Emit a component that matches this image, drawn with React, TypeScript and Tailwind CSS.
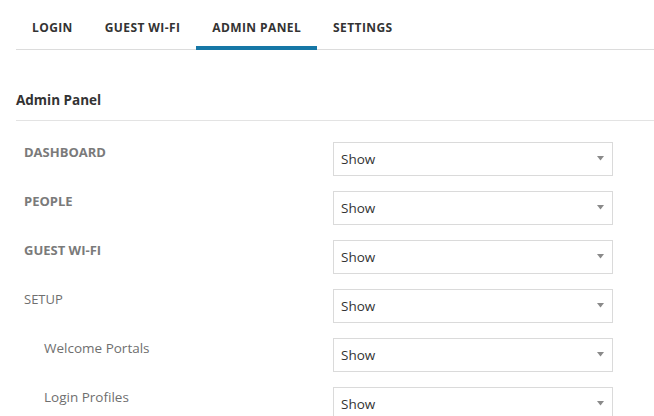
import React from 'react';

const tabs = ['Login', 'Guest Wi-Fi', 'Admin Panel', 'Settings'];

const rows = [
  { label: 'Dashboard', kind: 'section' },
  { label: 'People', kind: 'section' },
  { label: 'Guest Wi-Fi', kind: 'section' },
  { label: 'Setup', kind: 'group' },
  { label: 'Welcome Portals', kind: 'child' },
  { label: 'Login Profiles', kind: 'child' },
];

function Label({ label, kind }: { label: string; kind: string }) {
  if (kind === 'section') {
    return <div className="pl-2 w-[317px] text-[13px] leading-[20px] font-bold uppercase text-[#7a7a7a]">{label}</div>;
  }
  if (kind === 'group') {
    return <div className="pl-2 w-[317px] text-[13px] leading-[20px] uppercase text-[#6f6f6f]">{label}</div>;
  }
  return <div className="pl-7 w-[317px] text-[13.5px] leading-[20px] text-[#6f6f6f]">{label}</div>;
}

export default function App() {
  return (
    <div className="min-h-[416px] bg-white pl-4" style={{ fontFamily: '"Open Sans", "Noto Sans", sans-serif' }}>
      {/* Tabs */}
      <div className="flex pt-[5px] border-b border-[#dcdcdc]">
        {tabs.map((t) => (
          <div
            key={t}
            className={`px-4 pt-[14px] pb-[9px] -mb-px text-[12px] leading-[18px] tracking-[0.4px] font-bold uppercase text-[#333] border-b-4 ${
              t === 'Admin Panel' ? 'border-[#1677a6]' : 'border-transparent'
            }`}
          >
            {t}
          </div>
        ))}
      </div>

      {/* Section header */}
      <div className="pt-[41px] pb-[11px] border-b border-[#e3e3e3] text-[13.5px] leading-[18px] font-bold text-[#333]">
        Admin Panel
      </div>

      <div className="flex flex-col gap-[15px] pt-[21px]">
        {rows.map((r) => (
          <div key={r.label} className="flex items-start">
            <Label label={r.label} kind={r.kind} />
            <div className="w-[280px] h-[34px] border border-[#dadada] bg-white flex items-center justify-between pl-[7px] pr-[8px]">
              <span className="text-[13.5px] text-[#333]">Show</span>
              <svg width="7" height="5" viewBox="0 0 7 5" className="mt-[-2px]">
                <path d="M0 0 H7 L3.5 4.5 Z" fill="#8a8a8a" />
              </svg>
            </div>
          </div>
        ))}
      </div>
    </div>
  );
}
